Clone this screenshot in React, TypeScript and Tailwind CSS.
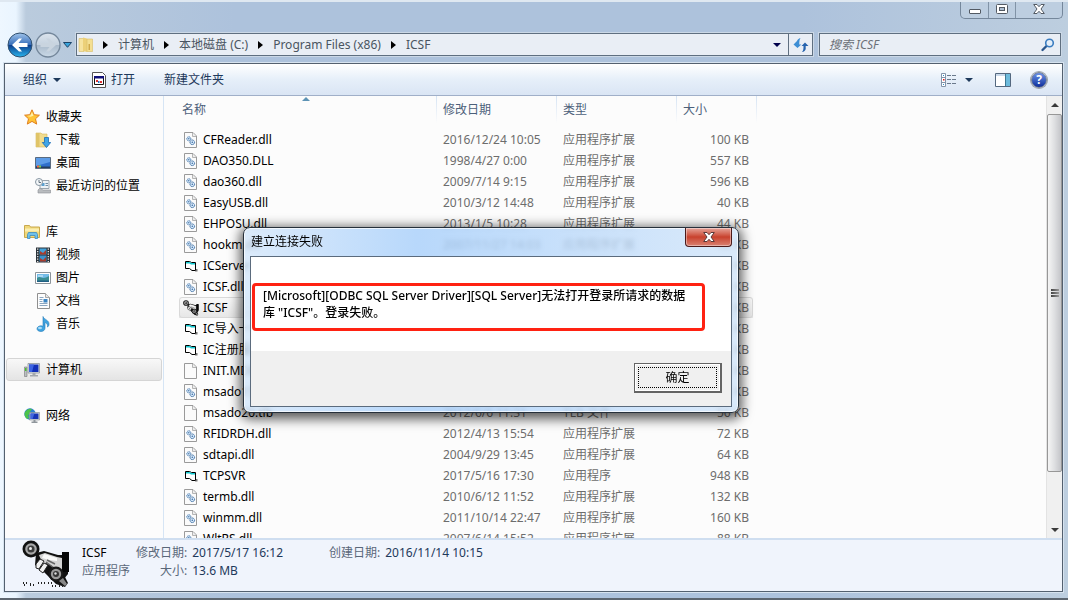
import { useState } from "react";
import type { ReactNode } from "react";
import clsx from "clsx";

type FileKind = "dll" | "vb" | "blank" | "icsf";
type FileRow = { name: string; date: string; type: string; size: string; kind: FileKind };

const EXT = "应用程序扩展";
const APP = "应用程序";

const files: FileRow[] = [
  { name: "CFReader.dll", date: "2016/12/24 10:05", type: EXT, size: "100 KB", kind: "dll" },
  { name: "DAO350.DLL", date: "1998/4/27 0:00", type: EXT, size: "557 KB", kind: "dll" },
  { name: "dao360.dll", date: "2009/7/14 9:15", type: EXT, size: "596 KB", kind: "dll" },
  { name: "EasyUSB.dll", date: "2010/3/12 14:48", type: EXT, size: "40 KB", kind: "dll" },
  { name: "EHPOSU.dll", date: "2013/1/5 10:28", type: EXT, size: "44 KB", kind: "dll" },
  { name: "hookm.dll", date: "2007/11/27 14:03", type: EXT, size: "48 KB", kind: "dll" },
  { name: "ICServer", date: "2017/5/16 17:30", type: APP, size: "512 KB", kind: "vb" },
  { name: "ICSF.dll", date: "2017/5/16 17:30", type: EXT, size: "64 KB", kind: "dll" },
  { name: "ICSF", date: "2017/5/17 16:12", type: APP, size: "13,928 KB", kind: "icsf" },
  { name: "IC导入一卡通", date: "2017/5/16 17:30", type: APP, size: "88 KB", kind: "vb" },
  { name: "IC注册服务", date: "2017/5/16 17:30", type: APP, size: "72 KB", kind: "vb" },
  { name: "INIT.MDB", date: "2017/5/16 17:30", type: "MDB 文件", size: "96 KB", kind: "blank" },
  { name: "msado15.dll", date: "2012/6/6 11:31", type: EXT, size: "504 KB", kind: "dll" },
  { name: "msado20.tlb", date: "2012/6/6 11:31", type: "TLB 文件", size: "56 KB", kind: "blank" },
  { name: "RFIDRDH.dll", date: "2012/4/13 15:54", type: EXT, size: "72 KB", kind: "dll" },
  { name: "sdtapi.dll", date: "2004/9/29 13:45", type: EXT, size: "64 KB", kind: "dll" },
  { name: "TCPSVR", date: "2017/5/16 17:30", type: APP, size: "948 KB", kind: "vb" },
  { name: "termb.dll", date: "2010/6/12 11:52", type: EXT, size: "132 KB", kind: "dll" },
  { name: "winmm.dll", date: "2011/10/14 22:47", type: EXT, size: "160 KB", kind: "dll" },
  { name: "WltRS.dll", date: "2007/6/14 15:52", type: EXT, size: "88 KB", kind: "dll" },
];

function Icon({ children, className = "size-4" }: { children: ReactNode; className?: string }) {
  return (
    <svg viewBox="0 0 16 16" className={clsx("shrink-0", className)} aria-hidden="true">
      {children}
    </svg>
  );
}

function CaretDown({ className = "text-[#1e395b]" }: { className?: string }) {
  return (
    <svg viewBox="0 0 8 4" className={clsx("h-1 w-2 shrink-0", className)} aria-hidden="true">
      <path d="M0 0h8L4 4z" fill="currentColor" />
    </svg>
  );
}

function CaretRight() {
  return (
    <svg viewBox="0 0 5 8" className="h-2 w-[5px] shrink-0" aria-hidden="true">
      <path d="M0 0l5 4-5 4z" fill="#000" />
    </svg>
  );
}

function Page() {
  return (
    <>
      <path d="M1.500.5h8.500l3.500 3.500v11.500h-12z" fill="#fbfbfb" stroke="#9a9a9a" />
      <path d="M9.500 1v3.500H13" fill="#ececec" stroke="#b4b4b4" />
    </>
  );
}

// telephone handset and clasped hands, used at 16px and 48px
function HandsetShape() {
  return (
    <>
      <path d="M14 13l8-2 14 4 10 0v19l-5 6-14-3-7-7-7-5z" fill="#111" />
      <circle cx="9" cy="9" r="8.500" fill="#111" />
      <circle cx="9" cy="9" r="5.800" fill="#a8a8a8" />
      <circle cx="9" cy="9" r="3.600" fill="#3c3c3c" />
      <circle cx="8.500" cy="8.500" r="1.500" fill="#eee" />
      <path d="M17 15l6-2 12 4 5 1v12l-5 3-5-7-6-3-4 3-3-2 2-4z" fill="#d4d4d4" />
      <path d="M22 14l13 4v3l-8-1-7-2z" fill="#fafafa" />
      <path d="M25 20l8 4M24 22l8 6" stroke="#666" strokeWidth="1.400" />
      <path d="M14 24l4-5 4 2-5 8-3-1zM17 30l5-7 4 2-5 8z" fill="#f0f0f0" stroke="#222" />
      <path d="M40 12h7v20h-7z" fill="#060606" />
      <path d="M26 32l13-3 7 14-3 4-9-3-7-7z" fill="#111" />
      <circle cx="34" cy="34" r="7.500" fill="#191919" />
      <circle cx="34" cy="34" r="5.200" fill="#9b9b9b" />
      <circle cx="34" cy="34" r="3" fill="#333" />
      <circle cx="33.500" cy="33.500" r="1.200" fill="#ddd" />
      <path d="M37 41l4-3 4 6-2 2z" fill="#888" />
    </>
  );
}

function FileIcon({ kind }: { kind: FileKind }) {
  if (kind === "vb") {
    return (
      <Icon>
        <path d="M2.500 3.500h4l2 1h4v8H9l-2.500-2h-4z" fill="#fff" stroke="#000" />
        <path d="M3 4h3.500l2 1H12v1.500H8L6.500 5.500H3z" fill="#10c8cf" />
        <path d="M13 11h1.500v2.500H12V13h1z" fill="#777" />
      </Icon>
    );
  }
  if (kind === "icsf") {
    return (
      <svg viewBox="0 0 48 48" className="size-4 shrink-0" aria-hidden="true">
        <HandsetShape />
      </svg>
    );
  }
  return (
    <Icon>
      <Page />
      {kind === "dll" && (
        <>
          <circle cx="5.800" cy="6.800" r="2" fill="#d9eafa" stroke="#4a7cb0" strokeDasharray="1.300 .4" />
          <circle cx="9.300" cy="10.300" r="2.300" fill="#d9eafa" stroke="#3a6da3" strokeDasharray="1.400 .4" />
          <circle cx="5.800" cy="6.800" r=".7" fill="#3a6da3" />
          <circle cx="9.300" cy="10.300" r=".8" fill="#3a6da3" />
        </>
      )}
    </Icon>
  );
}

const sideIcons: Record<string, ReactNode> = {
  收藏夹: (
    <Icon>
      <path d="M8 .8l2.200 4.900 5.200.5-3.900 3.600 1.200 5.300L8 12.400l-4.700 2.700 1.200-5.300L.6 6.200l5.200-.5z" fill="#ffc436" stroke="#e07f1e" />
      <path d="M8 3l1.500 3.700-3 1-3.500-.8 3.300-.5z" fill="#fff0a8" />
    </Icon>
  ),
  下载: (
    <Icon>
      <path d="M1 1h5l1 1h5v13H1z" fill="#f1dc8d" stroke="#d5b75c" strokeWidth=".6" />
      <path d="M1 1h3.500v14H1z" fill="#e0c468" />
      <path d="M9.500 5.500h4v5h2.200l-4.200 5-4.200-5h2.200z" fill="#3fa5e8" stroke="#1c6cb4" strokeWidth=".8" />
    </Icon>
  ),
  桌面: (
    <Icon>
      <path d="M.5 2.500h15v11H.5z" fill="#2f6fcb" stroke="#5a6b80" />
      <path d="M1 3h14v4L1 11z" fill="#5d9ce8" />
      <path d="M1 11.500h14V13H1z" fill="#233c5c" />
      <path d="M2 10.500h2v2H2z" fill="#f26a3b" />
      <path d="M4 10.500h2v2H4z" fill="#7ed04b" />
    </Icon>
  ),
  最近访问的位置: (
    <Icon>
      <path d="M5 2.500h9v8H5z" fill="#eef3f7" stroke="#9aa4ad" />
      <path d="M6.500 5h3v3h-3z" fill="#5ba0d0" />
      <path d="M10.500 5.500h2.500M10.500 7.500h2.500" stroke="#6f8ba3" />
      <path d="M3 15v-3l2-2 3 2h7.500v3z" fill="#b9bcbf" stroke="#8b8f93" strokeWidth=".6" />
      <circle cx="4" cy="4" r="3.500" fill="#f4f7f9" stroke="#8896a2" />
      <path d="M4 2v2.500h2" stroke="#456" fill="none" strokeWidth=".8" />
    </Icon>
  ),
  库: (
    <Icon>
      <path d="M.5 1.500h5l1 1.500h9v10.500H.5z" fill="#f0d779" stroke="#c9a94e" />
      <path d="M1 4.500h14v3H1z" fill="#fbeeb0" />
      <path d="M3.500 14.500v-4l1-2h8l1 2v4h-2.500v-3H6v3z" fill="#6fc0ea" stroke="#3b8cc0" strokeWidth=".8" />
    </Icon>
  ),
  视频: (
    <Icon>
      <path d="M1 .5h14v15H1z" fill="#2b3238" />
      <path d="M4.500 1.500h7v6h-7z" fill="#43a3dc" />
      <path d="M4.500 8.500h7v6h-7z" fill="#3a93d0" />
      <path d="M5 7.500V4l3 2 3-3v4.500zM5 14.500V11l3 2 3-3v4.500z" fill="#a73c2d" />
      <path d="M2.700 1.500v13.500M13.300 1.500v13.500" stroke="#e8ecef" strokeWidth="1.300" strokeDasharray="1.300 1.200" />
    </Icon>
  ),
  图片: (
    <Icon>
      <path d="M.5 2.500h15v11H.5z" fill="#fff" stroke="#8c949b" />
      <path d="M2 4h12v8H2z" fill="#74bce8" />
      <path d="M2 8c3-2 4 0 6 0s4-1 6-2v6H2z" fill="#3b8e93" />
      <path d="M2 10.500h12V12H2z" fill="#205f83" />
      <path d="M3 5.500h5v1H3z" fill="#e3f4fd" />
    </Icon>
  ),
  文档: (
    <Icon>
      <path d="M2.500.5h8l4 4v11h-12z" fill="#fdfdfd" stroke="#8f8f8f" />
      <path d="M10.500.5v4h4" fill="#e6e6e6" stroke="#a8a8a8" />
      <path d="M4.500 4.500h4M4.500 6.500h3M4.500 8.500h3M4.500 10.500h8M4.500 12.500h8" stroke="#8ba6c0" />
      <path d="M8.500 6h4v3.500h-4z" fill="#3c86c4" />
    </Icon>
  ),
  音乐: (
    <Icon>
      <path d="M8 .5c1 3 6 3.500 6 7.500 0 1.500-.6 2.500-1.500 3 .5-2.500-.8-4-2.500-4.500V12c0 2-1.700 3.500-4 3.500S2 14.400 2 12.800s1.700-3 4-3c.8 0 1.500.2 2 .5z" fill="#3fa3e0" stroke="#217ab8" strokeWidth=".6" />
      <ellipse cx="5" cy="12" rx="2" ry="1.200" fill="#a9dcf8" />
    </Icon>
  ),
  计算机: (
    <Icon>
      <path d="M.5 5h2.500v9.500H.5z" fill="#b9bec2" stroke="#777" strokeWidth=".6" />
      <path d="M1 6h1.500v3H1z" fill="#48c12f" />
      <path d="M4 1.500h11.500v9.500H4z" fill="#dde1e4" stroke="#8d949a" strokeWidth=".8" />
      <path d="M5 2.500h9.500v7.500H5z" fill="#1230b8" />
      <path d="M5 2.500h5l-2 7.500H5z" fill="#3c63e2" />
      <path d="M8.500 11h3v2h2.500v1.500H6V13h2.500z" fill="#a3a8ad" />
    </Icon>
  ),
  网络: (
    <Icon>
      <circle cx="6" cy="6" r="5.700" fill="#2a7fd0" />
      <path d="M1 4c2-3 5-4 7-3L6 4l1 2-3 1 1 3-2 1C.5 9 0 6 1 4z" fill="#4cc24a" />
      <path d="M5.500 4.500h10v7.500h-10z" fill="#d5dade" stroke="#7d858c" strokeWidth=".6" />
      <path d="M6.500 5.500h8v5.500h-8z" fill="#1733b5" />
      <path d="M6.500 5.500h4l-2 5.500h-2z" fill="#4267df" />
      <path d="M9.500 12h2v1.500h2V15h-6v-1.500h2z" fill="#8f969c" />
    </Icon>
  ),
};

const sideGroups = [
  { title: "收藏夹", items: ["下载", "桌面", "最近访问的位置"] },
  { title: "库", items: ["视频", "图片", "文档", "音乐"] },
  { title: "计算机", items: [] },
  { title: "网络", items: [] },
];

function CrossGlyph({ stroke }: { stroke: string }) {
  return (
    <svg viewBox="0 0 12 10" className="h-[10px] w-3" aria-hidden="true">
      <path
        d="M.7.500h3.300l2 2.200 2-2.200h3.300L8 5l3.300 4.500H8L6 7.300 4 9.500H.7L4 5z"
        fill="#fff"
        stroke={stroke}
        strokeLinejoin="round"
      />
    </svg>
  );
}

function TitleBar() {
  return (
    <div className="flex h-[33px] items-start justify-end pr-[5px]">
      <div className="flex h-[19px] overflow-hidden rounded-b-[5px] border border-t-0 border-[#75879b] bg-[#bdcee0]">
        <button aria-label="最小化" className="flex w-7 items-end justify-center border-r border-[#8193a6] pb-1">
          <span className="h-[5px] w-3 rounded-[1px] border border-[#535a63] bg-white" />
        </button>
        <button aria-label="最大化" className="flex w-[27px] items-center justify-center border-r border-[#8193a6]">
          <svg viewBox="0 0 12 10" className="h-[10px] w-3" aria-hidden="true">
            <rect x=".5" y=".5" width="11" height="9" rx="1" fill="#fff" stroke="#535a63" />
            <rect x="3.500" y="3.500" width="5" height="3" fill="#aebfd2" stroke="#535a63" />
          </svg>
        </button>
        <button aria-label="关闭" className="flex w-[46px] items-center justify-center">
          <CrossGlyph stroke="#535a63" />
        </button>
      </div>
    </div>
  );
}

function NavButtons() {
  return (
    <div className="flex w-[69px] shrink-0 items-center gap-[2px]">
      <button aria-label="后退">
        <svg viewBox="0 0 26 26" className="size-[26px]">
          <defs>
            <linearGradient id="back" x2="0" y2="1">
              <stop offset="0" stopColor="#9fc3ea" />
              <stop offset=".48" stopColor="#3a70bb" />
              <stop offset=".5" stopColor="#0c3b8a" />
              <stop offset="1" stopColor="#29b5ee" />
            </linearGradient>
          </defs>
          <circle cx="13" cy="13" r="12" fill="url(#back)" stroke="#31506f" />
          <path d="M5 13l7-6.500h3L11.500 11h9v4h-9l3.500 4.500h-3z" fill="#fff" />
        </svg>
      </button>
      <button aria-label="前进">
        <svg viewBox="0 0 26 26" className="size-[26px]">
          <defs>
            <linearGradient id="fwd" x2="0" y2="1">
              <stop offset="0" stopColor="#dbe4ed" />
              <stop offset=".48" stopColor="#c6d2df" />
              <stop offset=".5" stopColor="#a9b9ca" />
              <stop offset="1" stopColor="#cbdae8" />
            </linearGradient>
          </defs>
          <circle cx="13" cy="13" r="12" fill="url(#fwd)" stroke="#74879b" strokeWidth="1.300" />
          <path d="M21 13l-7-6.500h-3l3.500 4.500h-9v4h9L11 19.500h3z" fill="#c9d4df" />
        </svg>
      </button>
      <button aria-label="最近浏览">
        <svg viewBox="0 0 9 6" className="h-[6px] w-[9px]">
          <path d="M.5.5h8l-4 4.800z" fill="#38a4dc" stroke="#1c4368" />
        </svg>
      </button>
    </div>
  );
}

function AddressBar() {
  return (
    <div className="flex h-[23px] items-center pr-[7px] pl-[7px]">
      <NavButtons />
      <nav
        aria-label="地址"
        className="flex h-[23px] min-w-0 flex-1 items-center border border-[#5f6f80] bg-[#e9eef5] text-[#4a5561] outline outline-[#cbd8e6]"
      >
        <Icon className="ml-px size-4">
          <path d="M1 1.500h5v13H1z" fill="#f6e3a0" stroke="#d9bd66" strokeWidth=".6" />
          <path d="M5 .5l4 1v13.500l-4-1z" fill="#ecd078" />
          <path d="M9 2h5.500v12.500H9z" fill="#f4df92" stroke="#d9bd66" strokeWidth=".6" />
          <path d="M10.500 7h1.500v6h-1.500z" fill="#cfa94a" />
        </Icon>
        <ol className="ml-[9px] flex items-center gap-[10px]">
          {["计算机", "本地磁盘 (C:)", "Program Files (x86)", "ICSF"].map((part) => (
            <li key={part} className="flex items-center gap-[10px]">
              <CaretRight />
              <button className="whitespace-nowrap">{part}</button>
            </li>
          ))}
        </ol>
        <button aria-label="历史记录" className="ml-auto flex h-full w-[22px] items-center justify-center">
          <CaretDown className="text-[#00004c]" />
        </button>
        <button aria-label="刷新" className="flex h-full w-6 items-center justify-center border-l border-[#5f6f80]">
          <Icon className="size-4">
            <path d="M1 7.500L4.500 4v0C5 2.500 6 1.500 8 1c-1 1.500-1.200 3-1.200 6.500h2L5 11z" fill="#3d8ed4" transform="translate(-.5 0)" />
            <path d="M15.500 9L12 5.500 8.500 9h2c0 3 0 4.500-1.500 6 2-.2 3.500-1.500 3.700-3V9z" fill="#2563ae" />
          </Icon>
        </button>
      </nav>
      <label className="ml-[6px] flex h-[23px] w-[242px] items-center border border-[#5f6f80] bg-[#e9eef5] pr-1 outline outline-[#cbd8e6]">
        <input
          type="search"
          aria-label="搜索 ICSF"
          placeholder="搜索 ICSF"
          className="min-w-0 flex-1 bg-transparent pl-[9px] italic outline-none placeholder:text-[#6b7078]"
        />
        <Icon>
          <path d="M6.500 9l-4 4" stroke="#2b568c" strokeWidth="2.400" strokeLinecap="round" />
          <circle cx="9.500" cy="6" r="3.800" fill="#e4eef8" stroke="#3a7cc0" strokeWidth="1.600" />
        </Icon>
      </label>
    </div>
  );
}

function Toolbar() {
  return (
    <div className="flex h-8 shrink-0 items-center border-b border-[#a0afc8] bg-linear-to-b from-white via-[#e6eff9] via-50% to-[#dae5f4] pr-[15px] pl-[18px] text-[#1e395b]">
      <button className="flex items-center gap-[6px]">
        组织
        <CaretDown />
      </button>
      <button className="ml-[30px] flex items-center gap-1">
        <Icon>
          <path d="M1.500.5h10l3 3v12h-13z" fill="#fff" stroke="#555" />
          <path d="M3.500 4.500h9v8h-9z" fill="#fff" stroke="#111" />
          <path d="M3 4h10v2.500H3z" fill="#10107a" />
          <path d="M5 8h2v2H5zM9 9h2v2H9z" fill="#d33" />
          <path d="M7 9h1.500v2H7z" fill="#27c" />
        </Icon>
        打开
      </button>
      <button className="ml-[29px]">新建文件夹</button>
      <button aria-label="更改视图" className="ml-auto flex items-center gap-[9px]">
        <Icon>
          <path d="M1.500 1.500h4v13h-4zM1.500 5.500h4M1.500 10.500h4" fill="#fff" stroke="#8394a8" />
          <path d="M3 3h1v1H3zM3 12h1v1H3z" fill="#2b8bc7" />
          <path d="M3 7h1.500v1.500H3z" fill="#e01b1b" />
          <path d="M7 3.500h9M7 7.500h9M7 11.500h9" stroke="#6b7a8c" strokeDasharray="4 1" />
        </Icon>
        <CaretDown />
      </button>
      <button aria-label="预览窗格" className="ml-[22px]">
        <Icon>
          <path d="M.5 1.500h15v13H.5z" fill="#fff" stroke="#54687f" />
          <path d="M1 2h14v2H1z" fill="#c9d9ea" />
          <path d="M10 2h5v12h-5z" fill="#6dbbdc" />
          <path d="M10.500 2v12" stroke="#3e7893" />
        </Icon>
      </button>
      <button
        aria-label="帮助"
        className="ml-5 flex size-4 items-center justify-center rounded-full border border-[#7b8594] bg-linear-to-b from-[#6d91e5] to-[#112d9c] text-[12px] leading-3 font-bold text-white ring-1 ring-[#9aa1ab]"
      >
        ?
      </button>
    </div>
  );
}

function Sidebar() {
  return (
    <aside className="flex w-[159px] shrink-0 flex-col gap-[23px] overflow-hidden border-r border-[#d6e5f5] pt-[9px] text-black">
      {sideGroups.map((group) => (
        <ul key={group.title}>
          <li className="px-px">
            <a
              href="#"
              className={clsx(
                "flex h-[23px] items-center gap-[6px] rounded-[3px] border pl-[17px]",
                group.title === "计算机"
                  ? "border-[#d5d5d5] bg-linear-to-b from-[#f8f8f8] to-[#e4e4e4]"
                  : "border-transparent",
              )}
            >
              {sideIcons[group.title]}
              {group.title}
            </a>
          </li>
          {group.items.map((item) => (
            <li key={item}>
              <a href="#" className="flex h-[23px] items-center gap-[5px] pl-[30px]">
                {sideIcons[item]}
                {item}
              </a>
            </li>
          ))}
        </ul>
      ))}
    </aside>
  );
}

const columns = ["名称", "修改日期", "类型", "大小"];

function FileTable() {
  return (
    <div className="min-w-0 flex-1 overflow-hidden pl-[15px]">
      <table className="w-[574px] table-fixed border-collapse text-left text-[#6d6d6d]">
        <colgroup>
          <col className="w-[257px]" />
          <col className="w-[120px]" />
          <col className="w-[120px]" />
          <col className="w-[77px]" />
        </colgroup>
        <thead>
          <tr className="h-[33px] text-[#4c607a]">
            {columns.map((column, i) => (
              <th key={column} scope="col" className="relative p-0 align-top font-normal">
                <div className={clsx("flex h-[27px] items-center", i === 3 && "w-[81px]")}>
                  {i > 0 && <span className="h-full w-px bg-linear-to-b from-[#d5e3f3] to-[#fcfcfc]" />}
                  <span className={i > 0 ? "pl-[6px]" : "pl-[3px]"}>{column}</span>
                  {i === 3 && <span className="ml-auto h-full w-px bg-linear-to-b from-[#d5e3f3] to-[#fcfcfc]" />}
                </div>
                {i === 0 && (
                  <svg viewBox="0 0 8 4" className="absolute top-px left-[123px] h-1 w-2" aria-hidden="true">
                    <path d="M0 4l4-4 4 4z" fill="#5d93b5" />
                  </svg>
                )}
              </th>
            ))}
          </tr>
        </thead>
        <tbody>
          {files.map((file) => (
            <tr
              key={file.name}
              className={clsx(
                "h-[21px]",
                file.kind === "icsf" &&
                  "rounded-[3px] bg-linear-to-b from-[#fafafa] to-[#e6e6e6] outline -outline-offset-1 outline-[#d9d9d9]",
              )}
            >
              <td className="p-0">
                <div className="flex items-center gap-1 pl-1 whitespace-nowrap text-black">
                  <FileIcon kind={file.kind} />
                  {file.name}
                </div>
              </td>
              <td className="p-0 pl-[7px] whitespace-nowrap">{file.date}</td>
              <td className="p-0 pl-[7px] whitespace-nowrap">{file.type}</td>
              <td className="p-0 pr-1 text-right whitespace-nowrap">{file.size}</td>
            </tr>
          ))}
        </tbody>
      </table>
    </div>
  );
}

function ScrollRail() {
  return (
    <div className="flex w-4 shrink-0 flex-col items-center border-l border-[#e3e3e3] bg-[#f0f0f0]">
      <button aria-label="向上滚动" className="flex h-[18px] items-center justify-center">
        <svg viewBox="0 0 8 4" className="h-1 w-2" aria-hidden="true">
          <path d="M0 4l4-4 4 4z" fill="#3a3a3a" />
        </svg>
      </button>
      <div className="flex h-[81%] w-full flex-col items-center justify-center gap-px rounded-[2px] border border-[#979797] bg-linear-to-r from-[#f5f5f5] via-[#dedfe1] via-50% to-[#c4c5c9]">
        <span className="h-[2px] w-2 bg-linear-to-r from-[#444] to-[#999]" />
        <span className="h-[2px] w-2 bg-linear-to-r from-[#444] to-[#999]" />
        <span className="h-[2px] w-2 bg-linear-to-r from-[#444] to-[#999]" />
      </div>
      <button aria-label="向下滚动" className="mt-auto flex h-[17px] items-center justify-center">
        <CaretDown className="text-[#3a3a3a]" />
      </button>
    </div>
  );
}

function DetailsPane() {
  return (
    <footer className="flex h-[53px] shrink-0 items-start border-t-2 border-[#cfdef0] bg-[#f0f4fc] pl-[17px] leading-[18px]">
      <svg viewBox="0 0 48 48" className="size-12 shrink-0" aria-hidden="true">
        <HandsetShape />
        <path d="M1 43h4m3 2h5m3-2h7m3 0h4M2 45h2m4-1h2m20 2h4m3 0h6" stroke="#222" strokeWidth="2" strokeDasharray="1 2" />
      </svg>
      <div className="mt-1 ml-3 text-[#5a6779]">
        <div className="text-black">ICSF</div>
        <div>应用程序</div>
      </div>
      <dl className="mt-1 ml-[6px] grid grid-cols-[auto_auto] gap-x-[5px] text-[#1e395b]">
        <dt className="text-right text-[#5a6779]">修改日期:</dt>
        <dd>2017/5/17 16:12</dd>
        <dt className="text-right text-[#5a6779]">大小:</dt>
        <dd>13.6 MB</dd>
      </dl>
      <dl className="mt-1 ml-[46px] flex gap-[5px] text-[#1e395b]">
        <dt className="text-[#5a6779]">创建日期:</dt>
        <dd>2016/11/14 10:15</dd>
      </dl>
    </footer>
  );
}

function ErrorDialog({ onClose }: { onClose: () => void }) {
  return (
    <div
      role="alertdialog"
      aria-labelledby="dialog-title"
      aria-describedby="dialog-text"
      className="absolute top-[225px] left-[243px] w-[496px] rounded-[7px] border border-[#26303b] bg-linear-to-r from-[#d3e6fa]/80 via-[#a6cefa]/80 via-35% to-[#d0e4f9]/80 px-[6px] pb-[5px] shadow-[0_3px_12px_3px_rgba(0,0,0,0.65)] inset-ring inset-ring-white/70 backdrop-blur-[2px]"
    >
      <div className="flex h-7 items-start justify-between">
        <h1 id="dialog-title" className="pt-[6px] pl-px text-black">
          建立连接失败
        </h1>
        <button
          aria-label="关闭"
          onClick={onClose}
          className="flex h-[19px] w-[47px] items-center justify-center rounded-b-[4px] border border-t-0 border-[#4b1a1a] bg-linear-to-b from-[#e5a49a] via-[#c8402c] via-50% to-[#d98172] inset-ring inset-ring-white/40"
        >
          <CrossGlyph stroke="#5b3a3a" />
        </button>
      </div>
      <div className="border border-[#5b6b7d] bg-[#f0f0f0]">
        <div className="h-[94px] bg-white pt-[26px] pl-px">
          <p
            id="dialog-text"
            className="h-12 w-[453px] rounded-[4px] border-3 border-[#ff2212] pt-px pl-2 leading-[17px] font-medium text-black"
          >
            [Microsoft][ODBC SQL Server Driver][SQL Server]无法打开登录所请求的数据
            <br />库 "ICSF"。登录失败。
          </p>
        </div>
        <div className="flex justify-end pt-3 pr-[9px] pb-[13px]">
          <button
            onClick={onClose}
            className="h-[30px] w-[88px] border border-r-2 border-b-2 border-[#646464] bg-[#f0f0f0] p-[3px] text-black inset-ring inset-ring-white"
          >
            <span className="flex h-full items-center justify-center border border-dotted border-black">确定</span>
          </button>
        </div>
      </div>
    </div>
  );
}

export default function App() {
  const [dialogOpen, setDialogOpen] = useState(true);

  return (
    <div className="relative flex h-screen flex-col overflow-hidden border-t-2 border-[#dfe8f1] bg-[linear-gradient(to_right,#eef7ff_0,#eaf5ff_16px,#bacbdd_26px,#adc2dc_22%,#adc2dc_75%,#bdcedf_100%)] font-['Noto_Sans','Noto_Sans_CJK_SC',sans-serif] text-[12px] leading-4">
      <div className="-mt-[2px]">
        <TitleBar />
        <AddressBar />
      </div>
      <main className="mt-[7px] mr-[5px] mb-[6px] ml-1 flex min-h-0 flex-1 flex-col border border-[#53606f] bg-[#fcfcfc] outline outline-[#d7e3ef]">
        <Toolbar />
        <div className="flex min-h-0 flex-1">
          <Sidebar />
          <FileTable />
          <ScrollRail />
        </div>
        <DetailsPane />
      </main>
      <div className="h-[2px] shrink-0 bg-[#5d6670]" />
      {dialogOpen && <ErrorDialog onClose={() => setDialogOpen(false)} />}
    </div>
  );
}
